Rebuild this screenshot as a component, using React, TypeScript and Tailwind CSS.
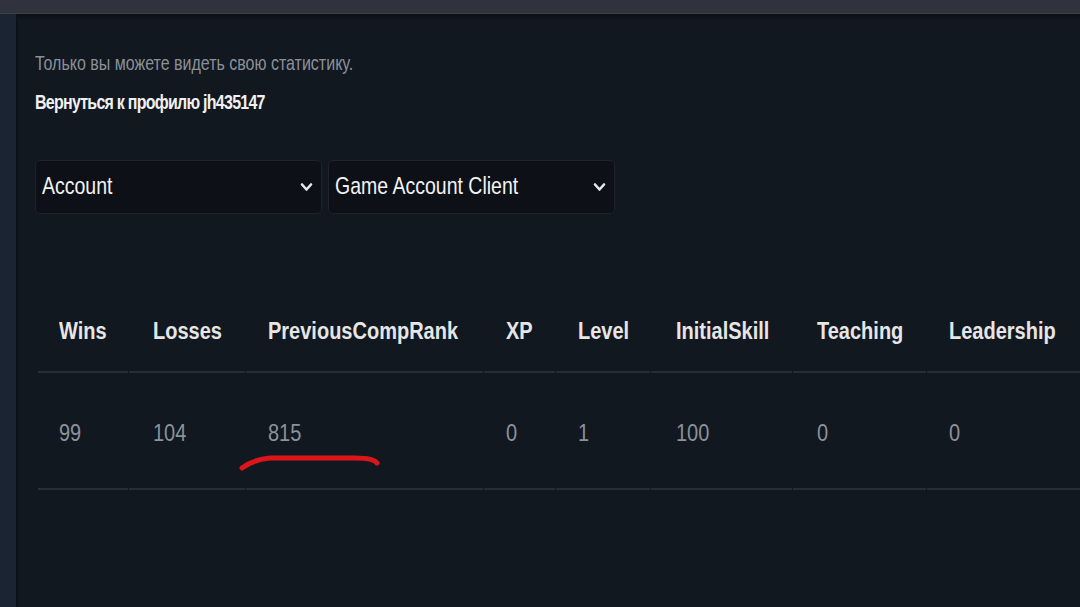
import React from "react";

const font = { fontFamily: '"Liberation Sans", Arial, sans-serif' };

const cols = [
  { h: "Wins", v: "99", w: 90, p: 21 },
  { h: "Losses", v: "104", w: 116, p: 24 },
  { h: "PreviousCompRank", v: "815", w: 237, p: 22 },
  { h: "XP", v: "0", w: 71, p: 22 },
  { h: "Level", v: "1", w: 94, p: 22 },
  { h: "InitialSkill", v: "100", w: 141, p: 25 },
  { h: "Teaching", v: "0", w: 133, p: 24 },
  { h: "Leadership", v: "0", w: 170, p: 22 },
];

function T({ children }: { children: React.ReactNode }) {
  return <span className="inline-block scale-y-[1.22] whitespace-nowrap">{children}</span>;
}

function Chevron() {
  return (
    <svg width="13" height="11" viewBox="0 0 13 11" className="shrink-0">
      <path d="M2 2.5 L6.5 7.5 L11 2.5" fill="none" stroke="#e8e8e8" strokeWidth="2.6" strokeLinecap="round" strokeLinejoin="round" />
    </svg>
  );
}

function Select({ label, w }: { label: string; w: number }) {
  return (
    <div
      className="h-[54px] flex items-center justify-between pl-[6px] pr-[8px] bg-[#0d1016] border border-[#1d222c] rounded-[5px] text-[19.5px] text-[#f2f2f2]"
      style={{ width: w }}
    >
      <T>{label}</T>
      <Chevron />
    </div>
  );
}

export default function App() {
  return (
    <div className="w-[1080px] h-[607px] overflow-hidden bg-[#121820] flex flex-col" style={font}>
      <div className="h-[14px] bg-[#30323d] border-b border-[#3d3f4b] shrink-0" />
      <div className="flex flex-1 min-h-0">
        <div className="w-[18px] bg-[#1a2433] border-r-2 border-[#0c1017] shrink-0" />
        <div className="flex-1 relative bg-gradient-to-b from-[#0b0f16] via-[#121820] to-[#121820] bg-[length:100%_14px] bg-no-repeat">
          <div className="pl-[17px] pt-[40px]">
            <div className="text-[16px] text-[#8b9098] leading-[20px]"><T>Только вы можете видеть свою статистику.</T></div>
            <div className="mt-[19px] text-[16px] text-[#f0f0f0] leading-[20px] font-bold tracking-[-0.75px]"><T>Вернуться к профилю jh435147</T></div>
            <div className="flex gap-[6px] mt-[47px]">
              <Select label="Account" w={287} />
              <Select label="Game Account Client" w={287} />
            </div>
            <table className="mt-[76px] ml-[2px] border-separate border-spacing-x-[1px] border-spacing-y-0 table-fixed">
              <thead>
                <tr>
                  {cols.map((c) => (
                    <th
                      key={c.h}
                      className="h-[83px] pb-[2px] text-left font-bold text-[20px] text-[#e6e6e6] border-b-2 border-[#262e38] whitespace-nowrap"
                      style={{ width: c.w, minWidth: c.w, paddingLeft: c.p }}
                    >
                      <T>{c.h}</T>
                    </th>
                  ))}
                </tr>
              </thead>
              <tbody>
                <tr>
                  {cols.map((c) => (
                    <td
                      key={c.h}
                      className="h-[117px] pt-[3px] text-left text-[20px] text-[#8b929b] border-b-2 border-[#262e38]"
                      style={{ paddingLeft: c.p }}
                    >
                      <T>{c.v}</T>
                    </td>
                  ))}
                </tr>
              </tbody>
            </table>
          </div>
          <svg className="absolute left-[200px] top-[430px]" width="170" height="32" viewBox="0 0 170 32">
            <path d="M24 24 C 32 18, 40 15, 52 14 L 137 14 C 150 14, 157 16, 159 19" fill="none" stroke="#dc151b" strokeWidth="5" strokeLinecap="round" />
          </svg>
        </div>
      </div>
    </div>
  );
}
